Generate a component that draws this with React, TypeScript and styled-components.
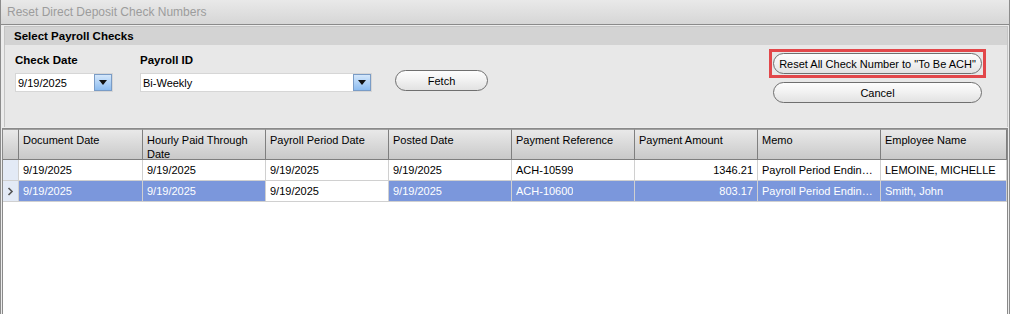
import React from "react";
import styled, { createGlobalStyle } from "styled-components";

const GlobalStyle = createGlobalStyle`
    html, body {
        margin: 0;
        padding: 0;
        background: #ffffff;
    }
    body {
        font-family: "Liberation Sans", Arial, sans-serif;
        font-size: 11px;
        color: #000;
    }
`;

const Window = styled.div`
    width: 1010px;
    height: 314px;
    box-sizing: border-box;
    display: flex;
    flex-direction: column;
    border-left: 1px solid #8c8c8c;
    border-right: 1px solid #8c8c8c;
    background: #ececec;
    overflow: hidden;
`;

const TitleBar = styled.div`
    height: 25px;
    flex: none;
    box-sizing: border-box;
    display: flex;
    align-items: center;
    padding-left: 6px;
    font-size: 12px;
    color: #9c9c9c;
    background: linear-gradient(#e9e9e9, #d6d6d6);
    border-bottom: 1px solid #8a8a8a;
`;

const GroupBox = styled.section`
    flex: none;
    margin: 1px 1px 0 3px;
    border: 1px solid #c4c4c4;
    border-bottom: none;
    background: #e8e8e8;
`;

const GroupHeader = styled.div`
    height: 18px;
    display: flex;
    align-items: center;
    padding-left: 9px;
    font-size: 11.5px;
    font-weight: bold;
    background: #d3d3d3;
`;

const GroupBody = styled.div`
    height: 82px;
    box-sizing: border-box;
    display: flex;
    align-items: flex-start;
    padding: 9px 21px 0 10px;
`;

const Field = styled.div<{ $width: number }>`
    width: ${(p) => p.$width}px;
    display: flex;
    flex-direction: column;
    gap: 5px;
    margin-right: 27px;
`;

const Label = styled.label`
    font-weight: bold;
    font-size: 11.5px;
    height: 14px;
`;

const Combo = styled.div`
    height: 19px;
    box-sizing: border-box;
    display: flex;
    background: #fff;
    border: 1px solid #d6d6d6;
`;

const ComboText = styled.span`
    flex: 1;
    padding: 3px 0 0 2px;
`;

const DropButton = styled.span`
    width: 18px;
    flex: none;
    box-sizing: border-box;
    display: flex;
    align-items: center;
    justify-content: center;
    border: 1px solid #7a9cc6;
    background: linear-gradient(#d4e7fb, #8cbcf0);
    &::after {
        content: "";
        border-left: 4px solid transparent;
        border-right: 4px solid transparent;
        border-top: 5px solid #111;
    }
`;

const PillButton = styled.button<{ $width: number }>`
    width: ${(p) => p.$width}px;
    height: 21px;
    padding: 0;
    border: 1px solid #6f6f6f;
    border-radius: 11px;
    background: linear-gradient(#fdfdfd 0%, #f1f1f1 50%, #e2e2e2 100%);
    font-family: inherit;
    font-size: 11px;
    white-space: nowrap;
    color: #000;
`;

const FetchSlot = styled.div`
    padding-top: 16px;
    margin-left: -4px;
`;

const Actions = styled.div`
    margin-left: auto;
    margin-top: -5px;
    display: flex;
    flex-direction: column;
    align-items: center;
    gap: 4px;
`;

const Highlight = styled.div`
    border: 3px solid #e2474a;
    padding: 1px;
`;

const GridWrap = styled.div`
    flex: 1;
    margin: 1px 1px 0 1px;
    border: 1px solid #8a8a8a;
    border-bottom: none;
    background: #fff;
`;

const Table = styled.div`
    display: grid;
    grid-template-columns: 16px 124px repeat(6, 123px) 1fr;
`;

const HeadCell = styled.div`
    height: 31px;
    box-sizing: border-box;
    padding: 3px 4px 0 4px;
    line-height: 14px;
    border-right: 1px solid #7f7f7f;
    border-bottom: 1px solid #7f7f7f;
    border-top: 1px solid #a0a0a0;
    background: linear-gradient(#e9e9e9, #c9c9c9);
`;

const Cell = styled.div<{ $selected?: boolean; $focus?: boolean; $right?: boolean }>`
    height: 21px;
    box-sizing: border-box;
    padding: 0 4px;
    display: flex;
    align-items: center;
    justify-content: ${(p) => (p.$right ? "flex-end" : "flex-start")};
    white-space: nowrap;
    overflow: hidden;
    line-height: 13px;
    border-right: 1px solid #d0d0d0;
    border-bottom: 1px solid #d0d0d0;
    background: ${(p) => (p.$focus ? "#fff" : p.$selected ? "#7b97dc" : "#fff")};
    color: ${(p) => (p.$focus ? "#000" : p.$selected ? "#fff" : "#000")};
`;

const Ellipsis = styled.span`
    overflow: hidden;
    text-overflow: ellipsis;
`;

const RowHeader = styled.div`
    height: 21px;
    box-sizing: border-box;
    display: flex;
    align-items: center;
    justify-content: center;
    border-right: 1px solid #d0d0d0;
    border-bottom: 1px solid #d0d0d0;
    background: #e3eaf6;
`;

const columns = [
    "Document Date",
    "Hourly Paid Through Date",
    "Payroll Period Date",
    "Posted Date",
    "Payment Reference",
    "Payment Amount",
    "Memo",
    "Employee Name",
];

const rows = [
    ["9/19/2025", "9/19/2025", "9/19/2025", "9/19/2025", "ACH-10599", "1346.21", "Payroll Period Ending: 9/19/2025", "LEMOINE, MICHELLE"],
    ["9/19/2025", "9/19/2025", "9/19/2025", "9/19/2025", "ACH-10600", "803.17", "Payroll Period Ending: 9/19/2025", "Smith, John"],
];

const Chevron = () => (
    <svg width="7" height="9" viewBox="0 0 7 9">
        <path d="M1.5 1 L5 4.5 L1.5 8" fill="none" stroke="#555" strokeWidth="1.6" />
    </svg>
);

export default function App() {
    return (
        <>
            <GlobalStyle />
            <Window>
                <TitleBar>Reset Direct Deposit Check Numbers</TitleBar>
                <GroupBox>
                    <GroupHeader>Select Payroll Checks</GroupHeader>
                    <GroupBody>
                        <Field $width={98}>
                            <Label>Check Date</Label>
                            <Combo>
                                <ComboText>9/19/2025</ComboText>
                                <DropButton />
                            </Combo>
                        </Field>
                        <Field $width={232}>
                            <Label>Payroll ID</Label>
                            <Combo>
                                <ComboText>Bi-Weekly</ComboText>
                                <DropButton />
                            </Combo>
                        </Field>
                        <FetchSlot>
                            <PillButton $width={93}>Fetch</PillButton>
                        </FetchSlot>
                        <Actions>
                            <Highlight>
                                <PillButton $width={209}>Reset All Check Number to "To Be ACH"</PillButton>
                            </Highlight>
                            <PillButton $width={209}>Cancel</PillButton>
                        </Actions>
                    </GroupBody>
                </GroupBox>
                <GridWrap>
                    <Table>
                        <HeadCell />
                        {columns.map((c) => (
                            <HeadCell key={c}>{c}</HeadCell>
                        ))}
                        {rows.map((r, i) => {
                            const selected = i === 1;
                            return (
                                <React.Fragment key={i}>
                                    <RowHeader>{selected && <Chevron />}</RowHeader>
                                    {r.map((v, j) => (
                                        <Cell key={j} $selected={selected} $focus={selected && j === 2} $right={j === 5}>
                                            <Ellipsis>{v}</Ellipsis>
                                        </Cell>
                                    ))}
                                </React.Fragment>
                            );
                        })}
                    </Table>
                </GridWrap>
            </Window>
        </>
    );
}
